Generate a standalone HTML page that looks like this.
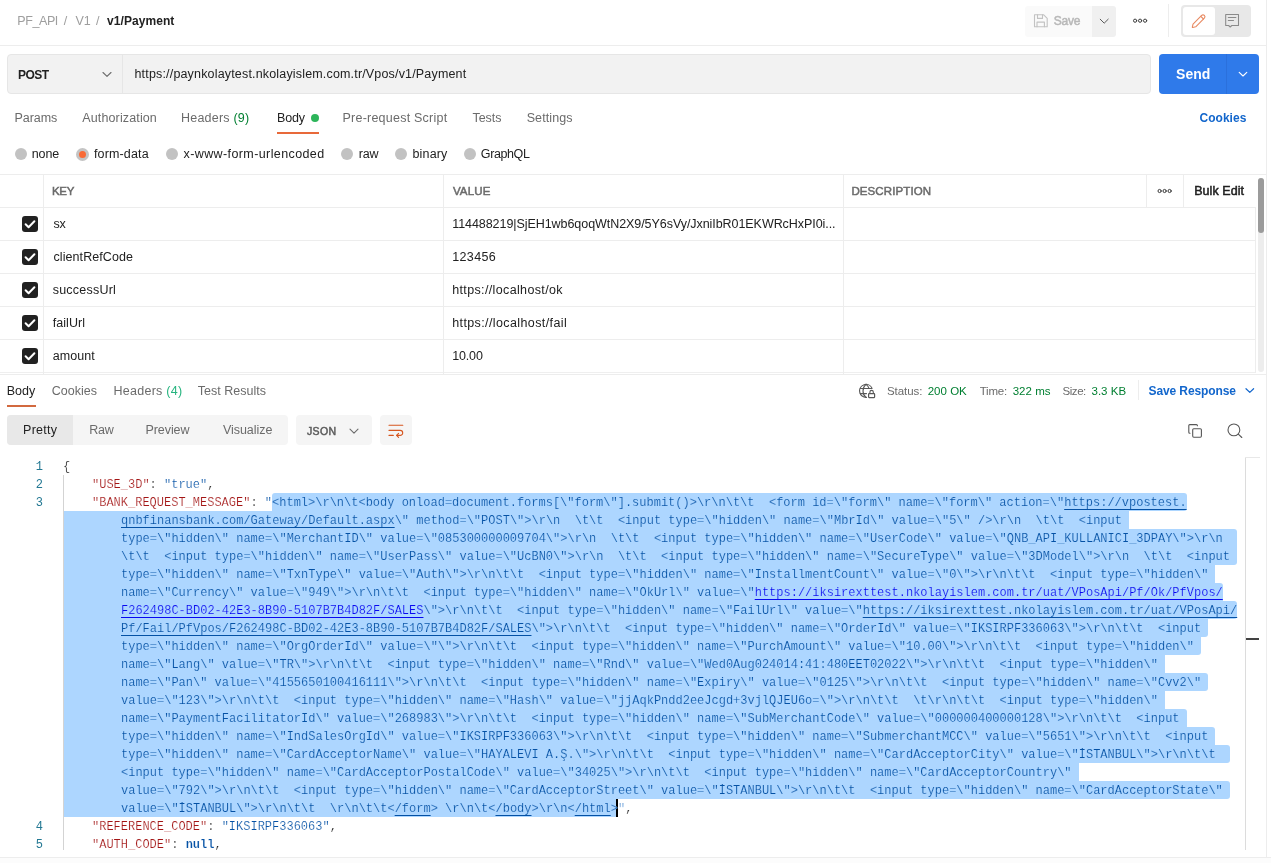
<!DOCTYPE html>
<html>
<head>
<meta charset="utf-8">
<title>Postman</title>
<style>
*{box-sizing:border-box;margin:0;padding:0}
html,body{width:1271px;height:863px;overflow:hidden;background:#fff}
body{font-family:"Liberation Sans",sans-serif;font-size:12.5px;color:#212121;position:relative;will-change:transform}
.abs{position:absolute}
.t{position:absolute;white-space:pre;line-height:16px;height:16px}
.g{color:#6b6b6b}
.lg{color:#9e9e9e}
.b{font-weight:bold;font-size:12px}
.grn{color:#007f31}
.blue{color:#1266cc}
.hl{position:absolute;background:#ededed}
.vl{position:absolute;background:#ededed;width:1px}
/* code */
.code{position:absolute;left:0;top:457px;width:1245px;height:393px;font-family:"Liberation Mono",monospace;font-size:12px;line-height:18px;overflow:hidden}
.ln{position:absolute;left:0;width:43px;text-align:right;color:#237893;height:18px;margin-top:1px}
.cl{position:absolute;white-space:pre;height:18px;color:#0451a5;margin-top:1px}
.k{color:#a31515;-webkit-text-stroke:0.2px #fff}
.thin{-webkit-text-stroke:0.2px #add6ff}
.thinw{-webkit-text-stroke:0.2px #fff}
.p{color:#212121;-webkit-text-stroke:0.2px #fff}
.s{color:#0451a5}
.u{text-decoration:underline;text-underline-offset:3px;text-decoration-thickness:1px;text-decoration-color:currentColor;-webkit-text-stroke:0}
.ua{color:#0808f0}
.sel{position:absolute;background:#add6ff;height:18px}
.radio{position:absolute;width:12px;height:12px;border-radius:50%;background:#c2c2c2}
.sb{-webkit-text-stroke:0.5px currentColor}
.cb{position:absolute;left:22px;width:16px;height:16px;border-radius:3px;background:#212121}
</style>
</head>
<body>
<!-- right pane border -->
<div class="vl" style="left:1266px;top:0;height:857px"></div>

<!-- header -->
<div class="t lg" id="bc1" style="left:17.3px;top:13px;letter-spacing:-0.42px">PF_API</div>
<div class="t lg" id="bc2" style="left:63.7px;top:13px;letter-spacing:0.32px">/</div>
<div class="t lg" id="bc3" style="left:75.5px;top:13px;letter-spacing:-0.2px">V1</div>
<div class="t lg" id="bc4" style="left:95.9px;top:13px;letter-spacing:0.02px">/</div>
<div class="t b" id="bc5" style="left:107.1px;top:13px;letter-spacing:0.06px">v1/Payment</div>
<div class="hl" style="left:0;top:45px;width:1266px;height:1px"></div>

<div class="abs" style="left:1025px;top:6px;width:67px;height:31px;background:#fafafa;border-radius:3px 0 0 3px"></div>
<div class="abs" style="left:1092px;top:6px;width:24px;height:31px;background:#f0f0f0;border-radius:0 3px 3px 0"></div>
<div class="t sb" id="save" style="left:1053.7px;top:13px;font-size:12px;color:#b8b8b8;letter-spacing:-0.19px">Save</div>
<div class="vl" style="left:1168px;top:4px;height:33px"></div>
<div class="abs" style="left:1181px;top:5px;width:70px;height:32px;background:#e8e8e8;border-radius:4px"></div>
<div class="abs" style="left:1183px;top:7px;width:32px;height:28px;background:#fff;border-radius:3px"></div>

<!-- url bar -->
<div class="abs" style="left:7px;top:54px;width:1144px;height:40px;background:#f2f2f2;border:1px solid #e6e6e6;border-radius:4px"></div>
<div class="abs" style="left:122px;top:55px;width:1px;height:38px;background:#e6e6e6"></div>
<div class="t b" id="post" style="left:17.9px;top:67px;font-size:12px;letter-spacing:-0.49px">POST</div>
<div class="t" id="url" style="left:134.5px;top:66px;letter-spacing:0.17px">https://paynkolaytest.nkolayislem.com.tr/Vpos/v1/Payment</div>
<div class="abs" style="left:1159px;top:54px;width:100px;height:40px;background:#2f7aea;border-radius:4px"></div>
<div class="abs" style="left:1226px;top:54px;width:1px;height:40px;background:#2b70dc"></div>
<div class="t b" id="send" style="left:1176.1px;top:65px;font-size:14px;color:#fff;line-height:18px;height:18px;letter-spacing:-0.01px">Send</div>

<!-- request tabs -->
<div class="t g" id="tb1" style="left:14.6px;top:110px;letter-spacing:-0.06px">Params</div>
<div class="t g" id="tb2" style="left:82.3px;top:110px;letter-spacing:0.13px">Authorization</div>
<div class="t g" id="tb3" style="left:181.1px;top:110px;letter-spacing:0.2px">Headers <span class="grn">(9)</span></div>
<div class="t" id="tb4" style="left:277.1px;top:110px;letter-spacing:-0.2px">Body</div>
<div class="abs" style="left:311px;top:114px;width:8px;height:8px;border-radius:50%;background:#2db55a"></div>
<div class="abs" style="left:277px;top:132px;width:42px;height:2px;background:#e8693a"></div>
<div class="t g" id="tb5" style="left:342.5px;top:110px;letter-spacing:0.23px">Pre-request Script</div>
<div class="t g" id="tb6" style="left:472.5px;top:110px;letter-spacing:-0.07px">Tests</div>
<div class="t g" id="tb7" style="left:526.7px;top:110px;letter-spacing:0.1px">Settings</div>
<div class="t b blue" id="cookies" style="left:1199.5px;top:110px;letter-spacing:0.02px">Cookies</div>

<!--REST-->
<!-- body type radios -->
<div class="radio" style="left:15px;top:148px"></div>
<div class="t" id="rd0" style="left:31.7px;top:146px;letter-spacing:-0.1px">none</div>
<div class="radio" style="left:76px;top:148px;width:13px;height:13px;background:#f96a36;border:3px solid #c4c4c4"></div>
<div class="t" id="rd1" style="left:93.9px;top:146px;letter-spacing:0.16px">form-data</div>
<div class="radio" style="left:166px;top:148px"></div>
<div class="t" id="rd2" style="left:183.5px;top:146px;letter-spacing:0.4px">x-www-form-urlencoded</div>
<div class="radio" style="left:341px;top:148px"></div>
<div class="t" id="rd3" style="left:358.7px;top:146px;letter-spacing:-0.13px">raw</div>
<div class="radio" style="left:395px;top:148px"></div>
<div class="t" id="rd4" style="left:412.5px;top:146px;letter-spacing:0.15px">binary</div>
<div class="radio" style="left:464px;top:148px"></div>
<div class="t" id="rd5" style="left:480.8px;top:146px;letter-spacing:-0.39px">GraphQL</div>
<!-- table -->
<div class="hl" style="left:0;top:174px;width:1266px;height:1px"></div>
<div class="hl" style="left:0;top:207px;width:1255px;height:1px"></div>
<div class="hl" style="left:0;top:240px;width:1255px;height:1px"></div>
<div class="hl" style="left:0;top:273px;width:1255px;height:1px"></div>
<div class="hl" style="left:0;top:306px;width:1255px;height:1px"></div>
<div class="hl" style="left:0;top:339px;width:1255px;height:1px"></div>
<div class="hl" style="left:0;top:372px;width:1255px;height:1px;background:#efefef"></div>
<div class="vl" style="left:43px;top:174px;height:200px"></div>
<div class="vl" style="left:443px;top:174px;height:200px"></div>
<div class="vl" style="left:843px;top:174px;height:200px"></div>
<div class="vl" style="left:1146px;top:174px;height:33px"></div>
<div class="vl" style="left:1183px;top:174px;height:33px"></div>
<div class="vl" style="left:1255px;top:207px;height:166px"></div>
<div class="t g sb" id="hk" style="left:51.9px;top:183px;font-size:11.5px;letter-spacing:-0.2px">KEY</div>
<div class="t g sb" id="hv" style="left:452.9px;top:183px;font-size:11.5px;letter-spacing:0.16px">VALUE</div>
<div class="t g sb" id="hd" style="left:851.4px;top:183px;font-size:11.5px;letter-spacing:0.11px">DESCRIPTION</div>
<div class="t sb" id="bulk" style="left:1194.2px;top:183px;letter-spacing:0.06px">Bulk Edit</div>
<div class="cb" style="top:216px"><svg width="16" height="16" viewBox="0 0 16 16"><path d="M3.6 8.3 L6.6 11.2 L12.4 5.2" fill="none" stroke="#fff" stroke-width="2" stroke-linecap="round" stroke-linejoin="round"/></svg></div>
<div class="t" id="k0" style="left:53.5px;top:216px;letter-spacing:-0.2px">sx</div>
<div class="t" id="v0" style="left:452.2px;top:216px;letter-spacing:-0.06px">114488219|SjEH1wb6qoqWtN2X9/5Y6sVy/JxniIbR01EKWRcHxPI0i...</div>
<div class="cb" style="top:249px"><svg width="16" height="16" viewBox="0 0 16 16"><path d="M3.6 8.3 L6.6 11.2 L12.4 5.2" fill="none" stroke="#fff" stroke-width="2" stroke-linecap="round" stroke-linejoin="round"/></svg></div>
<div class="t" id="k1" style="left:53.5px;top:249px;letter-spacing:0.08px">clientRefCode</div>
<div class="t" id="v1" style="left:452.2px;top:249px;letter-spacing:0.38px">123456</div>
<div class="cb" style="top:282px"><svg width="16" height="16" viewBox="0 0 16 16"><path d="M3.6 8.3 L6.6 11.2 L12.4 5.2" fill="none" stroke="#fff" stroke-width="2" stroke-linecap="round" stroke-linejoin="round"/></svg></div>
<div class="t" id="k2" style="left:52.7px;top:282px;letter-spacing:0.23px">successUrl</div>
<div class="t" id="v2" style="left:452.2px;top:282px;letter-spacing:0.36px">https://localhost/ok</div>
<div class="cb" style="top:315px"><svg width="16" height="16" viewBox="0 0 16 16"><path d="M3.6 8.3 L6.6 11.2 L12.4 5.2" fill="none" stroke="#fff" stroke-width="2" stroke-linecap="round" stroke-linejoin="round"/></svg></div>
<div class="t" id="k3" style="left:52.7px;top:315px;letter-spacing:0.07px">failUrl</div>
<div class="t" id="v3" style="left:452.2px;top:315px;letter-spacing:0.39px">https://localhost/fail</div>
<div class="cb" style="top:348px"><svg width="16" height="16" viewBox="0 0 16 16"><path d="M3.6 8.3 L6.6 11.2 L12.4 5.2" fill="none" stroke="#fff" stroke-width="2" stroke-linecap="round" stroke-linejoin="round"/></svg></div>
<div class="t" id="k4" style="left:52.7px;top:348px;letter-spacing:0.06px">amount</div>
<div class="t" id="v4" style="left:452.2px;top:348px;letter-spacing:-0.15px">10.00</div>
<div class="abs" style="left:1258px;top:178px;width:6px;height:194px;background:#ededed;border-radius:3px"></div>
<div class="abs" style="left:1258px;top:178px;width:6px;height:55px;background:#9b9b9b;border-radius:3px"></div>
<!-- response -->
<div class="hl" style="left:0;top:374px;width:1266px;height:1px"></div>
<div class="t" id="r1" style="left:6.8px;top:383px;letter-spacing:-0.03px">Body</div>
<div class="abs" style="left:7px;top:405px;width:29px;height:2px;background:#d2693f"></div>
<div class="t g" id="r2" style="left:51.7px;top:383px;letter-spacing:0.02px">Cookies</div>
<div class="t g" id="r3" style="left:113.5px;top:383px;letter-spacing:0.26px">Headers <span style="color:#26b47f">(4)</span></div>
<div class="t g" id="r4" style="left:197.8px;top:383px;letter-spacing:0px">Test Results</div>
<div class="t g" id="s1" style="left:886.9px;top:383px;font-size:11.5px;letter-spacing:-0.05px">Status:</div>
<div class="t grn" id="s2" style="left:927.7px;top:383px;font-size:11.5px;letter-spacing:0.02px">200 OK</div>
<div class="t g" id="s3" style="left:979.7px;top:383px;font-size:11.5px;letter-spacing:-0.21px">Time:</div>
<div class="t grn" id="s4" style="left:1012.7px;top:383px;font-size:11.5px;letter-spacing:0.02px">322 ms</div>
<div class="t g" id="s5" style="left:1062.5px;top:383px;font-size:11.5px;letter-spacing:-0.44px">Size:</div>
<div class="t grn" id="s6" style="left:1091.5px;top:383px;font-size:11.5px;letter-spacing:0.01px">3.3 KB</div>
<div class="vl" style="left:1138px;top:380px;height:20px"></div>
<div class="t b blue" id="s7" style="left:1148.5px;top:383px;letter-spacing:-0.1px">Save Response</div>
<div class="abs" style="left:7px;top:415px;width:281px;height:30px;background:#f5f5f5;border-radius:4px"></div>
<div class="abs" style="left:7px;top:415px;width:66px;height:30px;background:#e8e8e8;border-radius:4px 0 0 4px"></div>
<div class="t" id="vb1" style="left:23.1px;top:422px;letter-spacing:0.23px">Pretty</div>
<div class="t g" id="vb2" style="left:89.2px;top:422px;letter-spacing:-0.2px">Raw</div>
<div class="t g" id="vb3" style="left:145.5px;top:422px;letter-spacing:-0.08px">Preview</div>
<div class="t g" id="vb4" style="left:222.9px;top:422px;letter-spacing:-0.03px">Visualize</div>
<div class="abs" style="left:296px;top:415px;width:76px;height:30px;background:#f5f5f5;border-radius:4px"></div>
<div class="t sb" id="json" style="left:306.9px;top:423px;font-size:10.5px;color:#5c5c5c;-webkit-text-stroke-width:0.5px;letter-spacing:0.43px">JSON</div>
<div class="abs" style="left:380px;top:415px;width:32px;height:30px;background:#f5f5f5;border-radius:4px"></div>
<!-- code -->
<div class="code">
<div class="ln" style="top:0px">1</div>
<div class="ln" style="top:18px">2</div>
<div class="ln" style="top:36px">3</div>
<div class="ln" style="top:360px">4</div>
<div class="ln" style="top:378px">5</div>
<div class="abs" style="left:63px;top:18px;width:1px;height:375px;background:#d3d3d3"></div>
<div class="sel" style="left:272.0px;top:36px;width:915.4px;border-radius:3px 3px 3px 0"></div>
<div class="sel" style="left:64px;top:54px;width:1065.0px;border-radius:0 0px 0px 0"></div>
<div class="sel" style="left:64px;top:72px;width:1173.0px;border-radius:0 3px 0px 0"></div>
<div class="sel" style="left:64px;top:90px;width:1173.0px;border-radius:0 0px 3px 0"></div>
<div class="sel" style="left:64px;top:108px;width:1151.4px;border-radius:0 0px 0px 0"></div>
<div class="sel" style="left:64px;top:126px;width:1158.6px;border-radius:0 3px 0px 0"></div>
<div class="sel" style="left:64px;top:144px;width:1173.0px;border-radius:0 3px 3px 0"></div>
<div class="sel" style="left:64px;top:162px;width:1144.2px;border-radius:0 0px 3px 0"></div>
<div class="sel" style="left:64px;top:180px;width:1137.0px;border-radius:0 0px 3px 0"></div>
<div class="sel" style="left:64px;top:198px;width:1101.0px;border-radius:0 0px 0px 0"></div>
<div class="sel" style="left:64px;top:216px;width:1144.2px;border-radius:0 3px 3px 0"></div>
<div class="sel" style="left:64px;top:234px;width:1101.0px;border-radius:0 0px 0px 0"></div>
<div class="sel" style="left:64px;top:252px;width:1122.6px;border-radius:0 3px 0px 0"></div>
<div class="sel" style="left:64px;top:270px;width:1151.4px;border-radius:0 3px 0px 0"></div>
<div class="sel" style="left:64px;top:288px;width:1165.8px;border-radius:0 3px 3px 0"></div>
<div class="sel" style="left:64px;top:306px;width:1014.6px;border-radius:0 0px 0px 0"></div>
<div class="sel" style="left:64px;top:324px;width:1165.8px;border-radius:0 3px 3px 0"></div>
<div class="sel" style="left:64px;top:342px;width:553.8px;border-radius:0 0px 3px 0"></div>
<div class="abs" style="left:615.8px;top:342px;width:2px;height:18px;background:#000"></div>
<div class="cl p" style="left:63px;top:0">{</div>
<div class="cl thinw" style="left:92px;top:18px"><span class="k">"USE_3D"</span><span class="p">: </span>"true"<span class="p">,</span></div>
<div class="cl thin" style="left:92px;top:36px"><span class="k">"BANK_REQUEST_MESSAGE"</span><span class="p">: </span><span class="thinw">"</span>&lt;html&gt;\r\n\t&lt;body onload=document.forms[\"form\"].submit()&gt;\r\n\t\t  &lt;form id=\"form\" name=\"form\" action=\"<span class="u"><span class="thin">https://vpostest.</span></span></div>
<div class="cl thin" style="left:121px;top:54px"><span class="u"><span class="thin">qnbfinansbank.com/Gateway/Default.aspx</span></span>\" method=\"POST\"&gt;\r\n  \t\t  &lt;input type=\"hidden\" name=\"MbrId\" value=\"5\" /&gt;\r\n  \t\t  &lt;input </div>
<div class="cl thin" style="left:121px;top:72px">type=\"hidden\" name=\"MerchantID\" value=\"085300000009704\"&gt;\r\n  \t\t  &lt;input type=\"hidden\" name=\"UserCode\" value=\"QNB_API_KULLANICI_3DPAY\"&gt;\r\n  </div>
<div class="cl thin" style="left:121px;top:90px">\t\t  &lt;input type=\"hidden\" name=\"UserPass\" value=\"UcBN0\"&gt;\r\n  \t\t  &lt;input type=\"hidden\" name=\"SecureType\" value=\"3DModel\"&gt;\r\n  \t\t  &lt;input </div>
<div class="cl thin" style="left:121px;top:108px">type=\"hidden\" name=\"TxnType\" value=\"Auth\"&gt;\r\n\t\t  &lt;input type=\"hidden\" name=\"InstallmentCount\" value=\"0\"&gt;\r\n\t\t  &lt;input type=\"hidden\" </div>
<div class="cl thin" style="left:121px;top:126px">name=\"Currency\" value=\"949\"&gt;\r\n\t\t  &lt;input type=\"hidden\" name=\"OkUrl\" value=\"<span class="u ua"><span class="thin">https://iksirexttest.nkolayislem.com.tr/uat/VPosApi/Pf/Ok/PfVpos/</span></span></div>
<div class="cl thin" style="left:121px;top:144px"><span class="u ua"><span class="thin">F262498C-BD02-42E3-8B90-5107B7B4D82F/SALES</span></span>\"&gt;\r\n\t\t  &lt;input type=\"hidden\" name=\"FailUrl\" value=\"<span class="u"><span class="thin">https://iksirexttest.nkolayislem.com.tr/uat/VPosApi/</span></span></div>
<div class="cl thin" style="left:121px;top:162px"><span class="u"><span class="thin">Pf/Fail/PfVpos/F262498C-BD02-42E3-8B90-5107B7B4D82F/SALES</span></span>\"&gt;\r\n\t\t  &lt;input type=\"hidden\" name=\"OrderId\" value=\"IKSIRPF336063\"&gt;\r\n\t\t  &lt;input </div>
<div class="cl thin" style="left:121px;top:180px">type=\"hidden\" name=\"OrgOrderId\" value=\"\"&gt;\r\n\t\t  &lt;input type=\"hidden\" name=\"PurchAmount\" value=\"10.00\"&gt;\r\n\t\t  &lt;input type=\"hidden\" </div>
<div class="cl thin" style="left:121px;top:198px">name=\"Lang\" value=\"TR\"&gt;\r\n\t\t  &lt;input type=\"hidden\" name=\"Rnd\" value=\"Wed0Aug024014:41:480EET02022\"&gt;\r\n\t\t  &lt;input type=\"hidden\" </div>
<div class="cl thin" style="left:121px;top:216px">name=\"Pan\" value=\"4155650100416111\"&gt;\r\n\t\t  &lt;input type=\"hidden\" name=\"Expiry\" value=\"0125\"&gt;\r\n\t\t  &lt;input type=\"hidden\" name=\"Cvv2\" </div>
<div class="cl thin" style="left:121px;top:234px">value=\"123\"&gt;\r\n\t\t  &lt;input type=\"hidden\" name=\"Hash\" value=\"jjAqkPndd2eeJcgd+3vjlQJEU6o=\"&gt;\r\n\t\t  \t\r\n\t\t  &lt;input type=\"hidden\" </div>
<div class="cl thin" style="left:121px;top:252px">name=\"PaymentFacilitatorId\" value=\"268983\"&gt;\r\n\t\t  &lt;input type=\"hidden\" name=\"SubMerchantCode\" value=\"000000400000128\"&gt;\r\n\t\t  &lt;input </div>
<div class="cl thin" style="left:121px;top:270px">type=\"hidden\" name=\"IndSalesOrgId\" value=\"IKSIRPF336063\"&gt;\r\n\t\t  &lt;input type=\"hidden\" name=\"SubmerchantMCC\" value=\"5651\"&gt;\r\n\t\t  &lt;input </div>
<div class="cl thin" style="left:121px;top:288px">type=\"hidden\" name=\"CardAcceptorName\" value=\"HAYALEVI A.Ş.\"&gt;\r\n\t\t  &lt;input type=\"hidden\" name=\"CardAcceptorCity\" value=\"İSTANBUL\"&gt;\r\n\t\t  </div>
<div class="cl thin" style="left:121px;top:306px">&lt;input type=\"hidden\" name=\"CardAcceptorPostalCode\" value=\"34025\"&gt;\r\n\t\t  &lt;input type=\"hidden\" name=\"CardAcceptorCountry\" </div>
<div class="cl thin" style="left:121px;top:324px">value=\"792\"&gt;\r\n\t\t  &lt;input type=\"hidden\" name=\"CardAcceptorStreet\" value=\"İSTANBUL\"&gt;\r\n\t\t  &lt;input type=\"hidden\" name=\"CardAcceptorState\" </div>
<div class="cl thin" style="left:121px;top:342px">value=\"İSTANBUL\"&gt;\r\n\t\t  \r\n\t\t&lt;<span class="u"><span class="thin">/form</span></span>&gt; \r\n\t&lt;<span class="u"><span class="thin">/body</span></span>&gt;\r\n&lt;<span class="u"><span class="thin">/html</span></span>&gt;<span style="color:#8fb2da">"</span><span class="p">,</span></div>
<div class="cl thinw" style="left:92px;top:360px"><span class="k">"REFERENCE_CODE"</span><span class="p">: </span>"IKSIRPF336063"<span class="p">,</span></div>
<div class="cl thinw" style="left:92px;top:378px"><span class="k">"AUTH_CODE"</span><span class="p">: </span><span class="b" style="color:#0451a5">null</span><span class="p">,</span></div>
</div>
<div class="vl" style="left:1245px;top:457px;height:393px;background:#dcdcdc"></div>
<div class="hl" style="left:1245px;top:457px;width:15px;height:1px;background:#e8e8e8"></div>
<div class="abs" style="left:1246px;top:638px;width:13px;height:2px;background:#424242"></div>
<div class="hl" style="left:0;top:857px;width:1271px;height:1px;background:#ededed"></div>
<div class="abs" style="left:0;top:858px;width:1271px;height:5px;background:#fcfcfc"></div>
<!--/REST-->
<!--ICONS-->
<svg class="abs" style="left:0;top:0;pointer-events:none" width="1271" height="863" viewBox="0 0 1271 863" fill="none" stroke-linecap="round" stroke-linejoin="round">
<g stroke="#c2c2c2" stroke-width="1.1"><path d="M1034.5 14.8h9.2l3.5 3.5v8.4h-12.7z"/><path d="M1037.5 14.8v3.6h5v-3.6"/><path d="M1037 26.7v-4.6h7.4v4.6"/></g>
<path d="M1100.2 19.2l4 4 4-4" stroke="#5a5a5a" stroke-width="1"/>
<circle cx="1135.1" cy="20.7" r="1.6" stroke="#3b3b3b" stroke-width="1"/>
<circle cx="1140.1" cy="20.7" r="1.6" stroke="#3b3b3b" stroke-width="1"/>
<circle cx="1145.1" cy="20.7" r="1.6" stroke="#3b3b3b" stroke-width="1"/>
<g stroke="#e88a62" stroke-width="1.1" transform="translate(1198.9 20.9) rotate(-45)"><path d="M-9 0.3q-0.4-0.3 0-0.6l2.6-1.6h12.2a1.9 1.9 0 0 1 1.9 1.9v0a1.9 1.9 0 0 1-1.9 1.9h-12.2z"/><path d="M4.6-1.9v3.8"/></g>
<g stroke="#8a8a8a" stroke-width="1.05"><path d="M1225.7 14.5h12.8v11h-6.7l-1.6 1.5-1.6-1.5h-2.9z"/><path d="M1228.3 17.5h7.6M1228.3 20.5h5.2"/></g>
<path d="M103 72.5l4 3.8 4-3.8" stroke="#6b6b6b" stroke-width="1.1"/>
<path d="M1239.2 72.3l3.8 3.7 3.8-3.7" stroke="#fff" stroke-width="1.1"/>
<circle cx="1159.6" cy="191" r="1.6" stroke="#3b3b3b" stroke-width="1"/>
<circle cx="1164.6" cy="191" r="1.6" stroke="#3b3b3b" stroke-width="1"/>
<circle cx="1169.6" cy="191" r="1.6" stroke="#3b3b3b" stroke-width="1"/>
<g stroke="#575757" stroke-width="1.1"><path d="M872 388.2A6.5 6.5 0 1 0 866.5 397.4"/><path d="M866 384.4c-4 3.2-4 9.8 0 13"/><path d="M866 384.4c1.6 1.2 2.6 2.6 3 4"/><path d="M860.2 388.5h11.6M860.2 393.6h6.3"/><rect x="868.6" y="393.7" width="6" height="3.9" rx="0.5" stroke-width="1.2"/><path d="M869.9 393.5v-1.4a1.7 1.7 0 0 1 3.4 0v1.4"/></g>
<path d="M1246 388.7l3.8 3.7 3.8-3.7" stroke="#1266cc" stroke-width="1.2"/>
<path d="M350 429.2l4 3.9 4-3.9" stroke="#6b6b6b" stroke-width="1.1"/>
<g stroke="#d6561f" stroke-width="1.1"><path d="M389 425.3h13.8"/><path d="M389 430.4h11.2a2.5 2.5 0 0 1 0 5h-3.4"/><path d="M398.6 433.4l-2 2 2 2"/><path d="M389 435.4h4.3"/></g>
<g stroke="#575757" stroke-width="1.1"><path d="M1197.4 425.8v-0.2a1 1 0 0 0-1-1h-6.6a1 1 0 0 0-1 1v6.6a1 1 0 0 0 1 1h0.2"/><rect x="1192.7" y="428.7" width="8.7" height="8.5" rx="1.1"/></g>
<g stroke="#575757" stroke-width="1.1"><circle cx="1233.9" cy="429.9" r="5.9"/><path d="M1238.3 434.2l3.5 3.3"/></g>
</svg>
<!--/ICONS-->
</body>
</html>
